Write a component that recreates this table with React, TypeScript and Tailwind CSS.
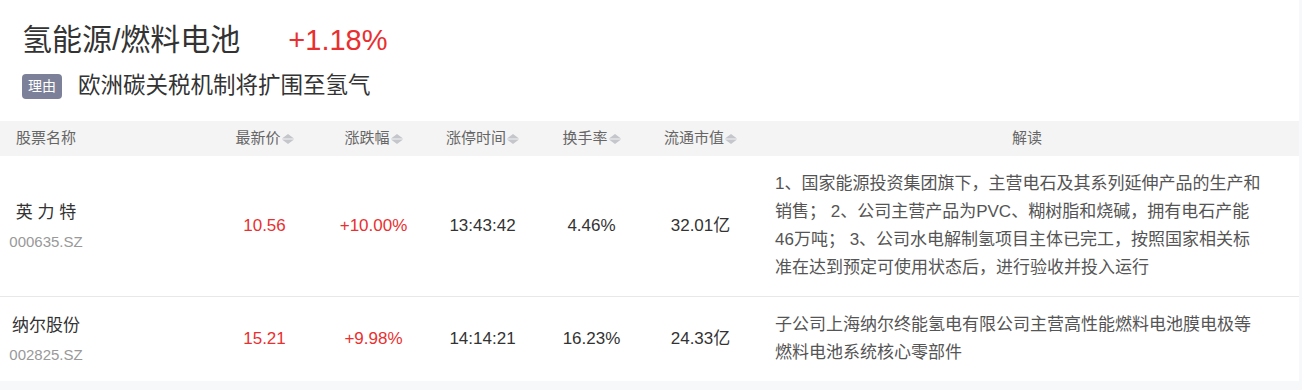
const stocks = [
  {
    name: '英 力 特',
    code: '000635.SZ',
    price: '10.56',
    change: '+10.00%',
    time: '13:43:42',
    turnover: '4.46%',
    cap: '32.01亿',
    note: '1、国家能源投资集团旗下，主营电石及其系列延伸产品的生产和销售； 2、公司主营产品为PVC、糊树脂和烧碱，拥有电石产能46万吨； 3、公司水电解制氢项目主体已完工，按照国家相关标准在达到预定可使用状态后，进行验收并投入运行',
  },
  {
    name: '纳尔股份',
    code: '002825.SZ',
    price: '15.21',
    change: '+9.98%',
    time: '14:14:21',
    turnover: '16.23%',
    cap: '24.33亿',
    note: '子公司上海纳尔终能氢电有限公司主营高性能燃料电池膜电极等燃料电池系统核心零部件',
  },
];

function SortIcon() {
  return (
    <svg width="12" height="10" viewBox="0 0 12 10" className="ml-[1px]">
      <polygon points="6,0 12,4.5 0,4.5" fill="#c4c6cc" />
      <polygon points="0,5.5 12,5.5 6,10" fill="#c4c6cc" />
    </svg>
  );
}

function SortHead({ label }: { label: string }) {
  return (
    <div className="flex items-center justify-center">
      <span>{label}</span>
      <SortIcon />
    </div>
  );
}

const cols = 'grid grid-cols-[210px_109px_109px_109px_109px_109px_1fr]';

export default function App() {
  return (
    <div className="min-h-[390px] bg-[#f7f8fa] font-['Liberation_Sans','Noto_Sans_CJK_SC',sans-serif]">
      <div className="w-[1299px] bg-white">
        {/* Topic header */}
        <div className="pl-[22px] pt-[18px] pb-[11px]">
          <div className="flex h-[44px] items-center">
            <span className="text-[30px] leading-[44px] text-[#333]">氢能源/燃料电池</span>
            <span className="ml-[48px] text-[29px] leading-[44px] text-[#e93030]">+1.18%</span>
          </div>
          <div className="flex h-[48px] items-center">
            <span className="flex h-[25px] w-[40px] items-center justify-center rounded-[4px] bg-[#7c8199] text-[14px] leading-[25px] text-white">
              理由
            </span>
            <span className="ml-[16px] text-[22.5px] leading-[30px] text-[#333]">欧洲碳关税机制将扩围至氢气</span>
          </div>
        </div>

        {/* Table header */}
        <div className={`${cols} h-[35px] items-center bg-[#f4f4f4] text-[15px] text-[#666]`}>
          <div className="pl-[16px]">股票名称</div>
          <SortHead label="最新价" />
          <SortHead label="涨跌幅" />
          <SortHead label="涨停时间" />
          <SortHead label="换手率" />
          <SortHead label="流通市值" />
          <div className="text-center">解读</div>
        </div>

        {/* Rows */}
        {stocks.map((s, i) => (
          <div
            key={s.code}
            className={`${cols} items-center ${i < stocks.length - 1 ? 'border-b border-[#e8e8e8]' : ''}`}
          >
            <div className="pl-[10px]">
              <div className="flex w-[72px] flex-col items-center">
                <span className="text-[17px] leading-[24px] whitespace-pre text-[#333]">{s.name}</span>
                <span className="mt-[7px] text-[15px] leading-[20px] text-[#999]">{s.code}</span>
              </div>
            </div>
            <div className="text-center text-[17px] text-[#e93030]">{s.price}</div>
            <div className="text-center text-[17px] text-[#e93030]">{s.change}</div>
            <div className="text-center text-[17px] text-[#333]">{s.time}</div>
            <div className="text-center text-[17px] text-[#333]">{s.turnover}</div>
            <div className="text-center text-[17px] text-[#333]">{s.cap}</div>
            <div className="py-[14px] pl-[20px]">
              <p className="w-[489px] text-[17px] leading-[28px] text-[#555]">{s.note}</p>
            </div>
          </div>
        ))}
      </div>
    </div>
  );
}
